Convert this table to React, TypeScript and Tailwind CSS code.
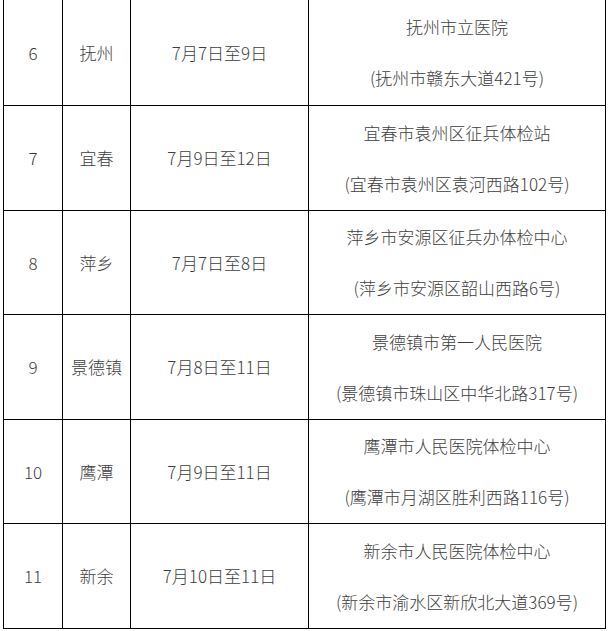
const rows = [
  { no: "6", city: "抚州", date: "7月7日至9日", place: "抚州市立医院", addr: "(抚州市赣东大道421号)", h: "h-[106px]" },
  { no: "7", city: "宜春", date: "7月9日至12日", place: "宜春市袁州区征兵体检站", addr: "(宜春市袁州区袁河西路102号)", h: "h-[105px]" },
  { no: "8", city: "萍乡", date: "7月7日至8日", place: "萍乡市安源区征兵办体检中心", addr: "(萍乡市安源区韶山西路6号)", h: "h-[104px]" },
  { no: "9", city: "景德镇", date: "7月8日至11日", place: "景德镇市第一人民医院", addr: "(景德镇市珠山区中华北路317号)", h: "h-[105px]" },
  { no: "10", city: "鹰潭", date: "7月9日至11日", place: "鹰潭市人民医院体检中心", addr: "(鹰潭市月湖区胜利西路116号)", h: "h-[104px]" },
  { no: "11", city: "新余", date: "7月10日至11日", place: "新余市人民医院体检中心", addr: "(新余市渝水区新欣北大道369号)", h: "h-[105px]" },
];

// ─── Table ─────────────────────────────────────────────────────────────────────
export default function App() {
  return (
    <div
      className="w-[608px] h-[631px] bg-white pl-[3px] text-[17px] font-light text-[#3e3e3e]"
      style={{ fontFamily: '"Noto Sans CJK SC", "Noto Sans", sans-serif' }}
    >
      <div className="w-[603px] border-l border-black">
        {rows.map((r) => (
          <div key={r.no} className={`grid grid-cols-[59px_68px_178px_297px] ${r.h}`}>
            <div className="flex items-center justify-center border-r border-b border-black">{r.no}</div>
            <div className="flex items-center justify-center border-r border-b border-black">{r.city}</div>
            <div className="flex items-center justify-center border-r border-b border-black">{r.date}</div>
            <div className="flex flex-col items-center justify-center gap-[25px] border-r border-b border-black leading-[26px]">
              <p>{r.place}</p>
              <p>{r.addr}</p>
            </div>
          </div>
        ))}
      </div>
    </div>
  );
}
